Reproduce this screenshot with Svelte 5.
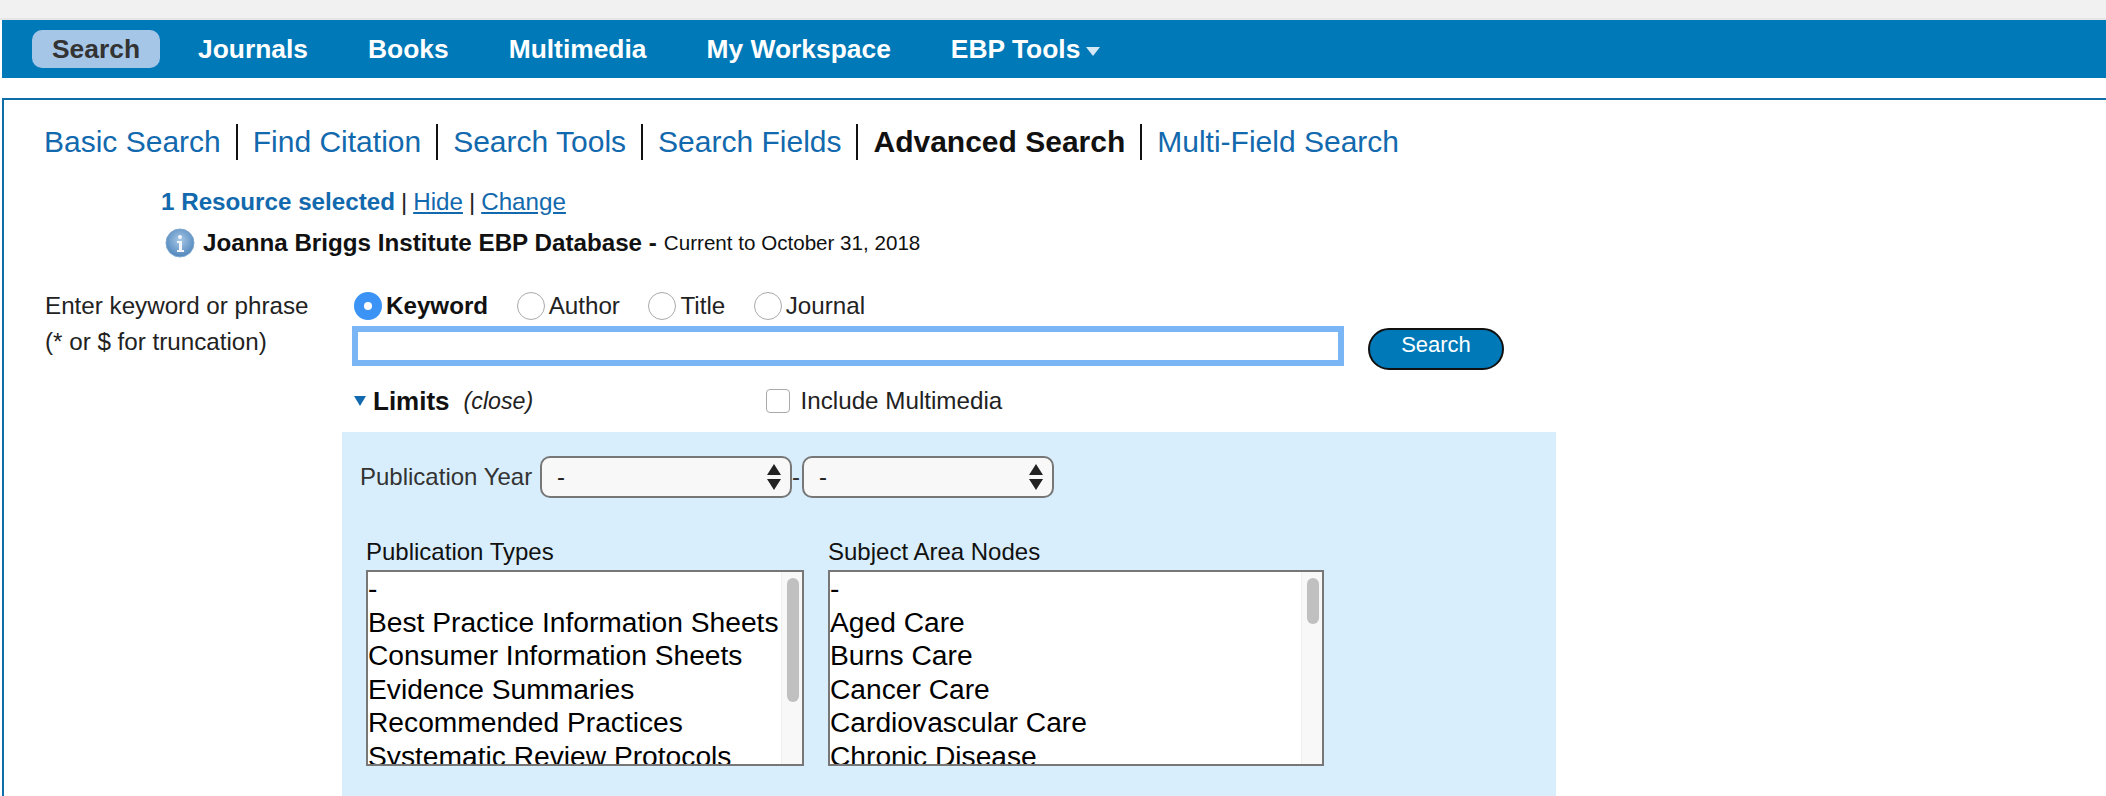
<script lang="ts">
  const navItems = ['Journals', 'Books', 'Multimedia', 'My Workspace'];
  const tabs = ['Basic Search', 'Find Citation', 'Search Tools', 'Search Fields'];
  const fields = ['Author', 'Title', 'Journal'];
  const pubTypes = [
    '-',
    'Best Practice Information Sheets',
    'Consumer Information Sheets',
    'Evidence Summaries',
    'Recommended Practices',
    'Systematic Review Protocols'
  ];
  const subjectNodes = ['-', 'Aged Care', 'Burns Care', 'Cancer Care', 'Cardiovascular Care', 'Chronic Disease'];
</script>

<div class="page">
  <div class="topband"></div>
  <nav class="navbar">
    <a class="nav-item active">Search</a>
    {#each navItems as item}
      <a class="nav-item">{item}</a>
    {/each}
    <a class="nav-item">EBP Tools <span class="caret"></span></a>
  </nav>

  <main class="frame">
    <div class="tabs">
      {#each tabs as tab}
        <a class="tab">{tab}</a>
      {/each}
      <a class="tab current">Advanced Search</a>
      <a class="tab last">Multi-Field Search</a>
    </div>

    <div class="resources">
      <div class="res-line">
        <b>1 Resource selected</b><span class="bar">|</span><a>Hide</a><span class="bar">|</span><a>Change</a>
      </div>
      <div class="db-line">
        <svg class="info" viewBox="0 0 30 30" width="30" height="30">
          <defs>
            <radialGradient id="infoGrad" cx="50%" cy="40%" r="60%">
              <stop offset="0" stop-color="#a9c8e6" />
              <stop offset="1" stop-color="#4f86bd" />
            </radialGradient>
          </defs>
          <circle cx="15" cy="15" r="14" fill="url(#infoGrad)" stroke="#7fa6cc" stroke-width="1" />
          <circle cx="15" cy="9" r="2" fill="#f2f6fb" />
          <path d="M12 13h5v9h2v2h-7v-2h2v-7h-2z" fill="#f2f6fb" />
        </svg>
        <b>Joanna Briggs Institute EBP Database -</b>
        <span class="current-to">Current to October 31, 2018</span>
      </div>
    </div>

    <div class="search-form">
      <div class="hint">
        <div>Enter keyword or phrase</div>
        <div>(* or $ for truncation)</div>
      </div>
      <div class="form-main">
        <div class="radios">
          <label class="radio-item selected"><span class="radio"></span><b>Keyword</b></label>
          {#each fields as field}
            <label class="radio-item"><span class="radio"></span>{field}</label>
          {/each}
        </div>
        <div class="input-row">
          <div class="text-input"></div>
          <button class="search-btn">Search</button>
        </div>
        <div class="limits-row">
          <span class="tri"></span>
          <b class="limits">Limits</b>
          <i class="close">(close)</i>
          <span class="checkbox"></span>
          <span class="include">Include Multimedia</span>
        </div>
      </div>
    </div>

    <section class="panel">
      <div class="year-row">
        <span class="year-label">Publication Year</span>
        <div class="select">
          <span>-</span>
          <svg class="arrows" viewBox="0 0 14 26" width="14" height="26"><path d="M7 0l7 11H0zM7 26L0 15h14z" fill="#222" /></svg>
        </div>
        <span class="dash">-</span>
        <div class="select">
          <span>-</span>
          <svg class="arrows" viewBox="0 0 14 26" width="14" height="26"><path d="M7 0l7 11H0zM7 26L0 15h14z" fill="#222" /></svg>
        </div>
      </div>

      <div class="lists">
        <div class="list-col">
          <div class="list-label">Publication Types</div>
          <div class="listbox types">
            <div class="rows">
              {#each pubTypes as row}
                <div class="row">{row}</div>
              {/each}
            </div>
            <div class="scroll"><div class="thumb long"></div></div>
          </div>
        </div>
        <div class="list-col">
          <div class="list-label">Subject Area Nodes</div>
          <div class="listbox nodes">
            <div class="rows">
              {#each subjectNodes as row}
                <div class="row">{row}</div>
              {/each}
            </div>
            <div class="scroll"><div class="thumb short"></div></div>
          </div>
        </div>
      </div>
    </section>
  </main>
</div>

<style>
  :global(body) {
    margin: 0;
    background: #fff;
    overflow: hidden;
  }

  .page {
    width: 2106px;
    height: 796px;
    overflow: hidden;
    font-family: "Liberation Sans", Arial, sans-serif;
    color: #111;
  }

  b {
    font-weight: 700;
  }

  .topband {
    height: 18px;
    background: #f1f1f1;
    border-bottom: 2px solid #e6e6e6;
  }

  .navbar {
    height: 58px;
    margin-left: 2px;
    background: #0079b8;
    display: flex;
    align-items: center;
    padding-left: 30px;
    gap: 60px;
    font-size: 26.4px;
    font-weight: 700;
    color: #fff;
  }

  .nav-item {
    line-height: 38px;
    white-space: nowrap;
  }

  .nav-item.active {
    width: 128px;
    height: 38px;
    margin-right: -22px;
    text-align: center;
    background: #a6c6e8;
    border-radius: 10px;
    color: #333;
  }

  .caret {
    display: inline-block;
    width: 0;
    height: 0;
    margin-left: -2px;
    vertical-align: 2px;
    border-left: 7px solid transparent;
    border-right: 7px solid transparent;
    border-top: 9px solid #d5e8f5;
  }

  .frame {
    margin: 20px 0 0 2px;
    border-top: 2px solid #0f6eaa;
    border-left: 2px solid #0f6eaa;
    height: 700px;
  }

  .tabs {
    display: flex;
    padding: 24px 0 0 40px;
    height: 36px;
    font-size: 30px;
    line-height: 36px;
    color: #1269ad;
  }

  .tab {
    padding-right: 15px;
    margin-right: 15px;
    border-right: 2px solid #111;
    white-space: nowrap;
  }

  .tab.current {
    color: #111;
    font-weight: 700;
  }

  .tab.last {
    border-right: none;
  }

  .resources {
    padding: 27px 0 0 157px;
    font-size: 24.2px;
  }

  .res-line {
    height: 30px;
    line-height: 30px;
    color: #1269ad;
  }

  .res-line a {
    text-decoration: underline;
  }

  .bar {
    color: #222;
    margin: 0 6px;
    font-size: 24px;
  }

  .db-line {
    display: flex;
    align-items: center;
    margin-top: 11px;
    margin-left: 4px;
    height: 30px;
  }

  .info {
    flex: none;
    margin-right: 8px;
  }

  .db-line b {
    color: #111;
  }

  .current-to {
    font-size: 20.6px;
    margin-left: 7px;
    white-space: nowrap;
  }

  .search-form {
    display: flex;
    margin-top: 30px;
    padding-left: 41px;
    font-size: 24.2px;
  }

  .hint {
    width: 307px;
    flex: none;
    line-height: 36px;
    color: #222;
  }

  .form-main {
    flex: none;
  }

  .radios {
    display: flex;
    height: 36px;
    align-items: center;
    padding-left: 2px;
    line-height: 36px;
    color: #222;
  }

  .radio-item {
    display: flex;
    align-items: center;
    margin-right: 28.5px;
  }

  .radio-item.selected {
    color: #111;
  }

  .radio {
    box-sizing: border-box;
    width: 28px;
    height: 28px;
    margin-right: 4px;
    border-radius: 50%;
    border: 1px solid #aaa;
    background: #fff;
  }

  .selected .radio {
    border: 10px solid #3b94f5;
  }

  .input-row {
    display: flex;
    align-items: flex-start;
    margin-top: 2px;
  }

  .text-input {
    box-sizing: border-box;
    width: 992px;
    height: 40px;
    background: #fff;
    border: 6px solid #7ab6f5;
  }

  .search-btn {
    box-sizing: border-box;
    width: 136px;
    height: 42px;
    margin: 2px 0 0 24px;
    padding: 0 0 8px;
    background: #0079b8;
    border: 2px solid #111;
    border-radius: 21px;
    color: #fff;
    font-family: inherit;
    font-size: 22px;
    line-height: 28px;
  }

  .limits-row {
    display: flex;
    align-items: center;
    height: 36px;
    margin-top: 13px;
    padding-left: 2px;
  }

  .tri {
    width: 0;
    height: 0;
    margin-right: 7px;
    border-left: 6px solid transparent;
    border-right: 6px solid transparent;
    border-top: 10px solid #1269ad;
  }

  .limits {
    font-size: 26px;
    margin-right: 14px;
  }

  .close {
    width: 302px;
    font-size: 23.2px;
    color: #222;
  }

  .checkbox {
    box-sizing: border-box;
    width: 24px;
    height: 24px;
    margin-right: 11px;
    background: #fff;
    border: 1px solid #aaa;
    border-radius: 4px;
  }

  .include {
    color: #222;
  }

  .panel {
    box-sizing: border-box;
    width: 1214px;
    height: 364px;
    margin: 13px 0 0 338px;
    padding: 24px 0 0 18px;
    background: #d9eefc;
    font-size: 24px;
    color: #333;
  }

  .year-row {
    display: flex;
    align-items: center;
    height: 42px;
  }

  .year-label {
    width: 180px;
    flex: none;
    white-space: nowrap;
  }

  .select {
    box-sizing: border-box;
    width: 252px;
    height: 42px;
    display: flex;
    align-items: center;
    justify-content: space-between;
    padding: 0 9px 0 15px;
    background: #f8f8f8;
    border: 2px solid #777;
    border-radius: 10px;
    color: #222;
  }

  .dash {
    width: 10px;
    overflow: hidden;
  }

  .lists {
    display: flex;
    gap: 24px;
    margin: 39px 0 0 6px;
  }

  .list-label {
    height: 33px;
    line-height: 30px;
    color: #111;
  }

  .listbox {
    box-sizing: border-box;
    display: flex;
    height: 196px;
    background: #fff;
    border: 2px solid #777;
    overflow: hidden;
    color: #000;
  }

  .listbox.types {
    width: 438px;
  }

  .listbox.nodes {
    width: 496px;
  }

  .rows {
    flex: 1;
    min-width: 0;
    padding: 0;
    font-size: 28.2px;
    line-height: 33.5px;
  }

  .row {
    white-space: nowrap;
  }

  .scroll {
    flex: none;
    box-sizing: border-box;
    width: 21px;
    padding: 6px 3px 0 5px;
    background: #f8f8f8;
    border-left: 1px solid #eee;
  }

  .thumb {
    background: #c0c0c0;
    border-radius: 6px;
    width: 12px;
  }

  .thumb.long {
    height: 124px;
  }

  .thumb.short {
    height: 46px;
  }
</style>
